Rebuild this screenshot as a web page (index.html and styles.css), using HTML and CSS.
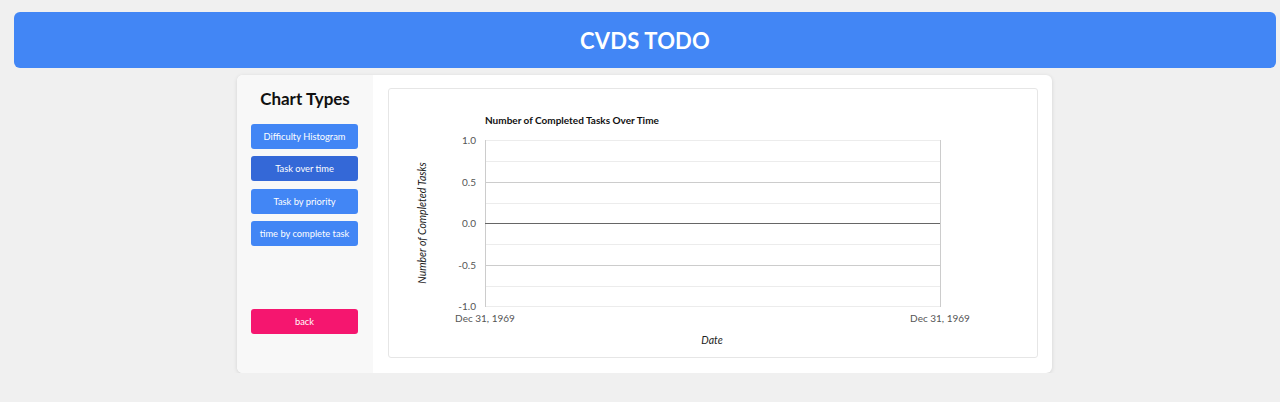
FILE: index.html
```html
<!DOCTYPE html>
<html>
<head>
<meta charset="utf-8">
<link rel="stylesheet" href="styles.css">
</head>
<body>
<div class="page">
  <header class="topbar"><h1 class="brand">CVDS TODO</h1></header>
  <main class="card">
    <aside class="sidebar">
      <h2 class="side-title">Chart Types</h2>
      <div class="btn-list">
        <button class="btn">Difficulty Histogram</button>
        <button class="btn active">Task over time</button>
        <button class="btn">Task by priority</button>
        <button class="btn">time by complete task</button>
      </div>
      <button class="btn back">back</button>
    </aside>
    <section class="content">
      <div class="chart-box">
        <svg class="chart" width="650" height="270" viewBox="0 0 650 270">
          <text class="c-title" x="97" y="36">Number of Completed Tasks Over Time</text>
          <g class="grid">
            <line x1="97" x2="552" y1="52.5" y2="52.5"/>
            <line x1="97" x2="552" y1="73.5" y2="73.5"/>
            <line x1="97" x2="552" y1="94.5" y2="94.5"/>
            <line x1="97" x2="552" y1="115.5" y2="115.5"/>
            <line x1="97" x2="552" y1="156.5" y2="156.5"/>
            <line x1="97" x2="552" y1="177.5" y2="177.5"/>
            <line x1="97" x2="552" y1="198.5" y2="198.5"/>
            <line x1="97" x2="552" y1="218.5" y2="218.5"/>
          </g>
          <g class="major">
            <line x1="97" x2="552" y1="94.5" y2="94.5"/>
            <line x1="97" x2="552" y1="177.5" y2="177.5"/>
          </g>
          <line class="frame" x1="97.5" x2="97.5" y1="52" y2="219"/>
          <line class="frame" x1="552.5" x2="552.5" y1="52" y2="219"/>
          <line class="zero" x1="97" x2="552" y1="135.5" y2="135.5"/>
          <g class="ylab">
            <text x="88" y="56">1.0</text>
            <text x="88" y="98">0.5</text>
            <text x="88" y="139">0.0</text>
            <text x="88" y="181">-0.5</text>
            <text x="88" y="222">-1.0</text>
          </g>
          <g class="xlab">
            <text x="97" y="234">Dec 31, 1969</text>
            <text x="552" y="234">Dec 31, 1969</text>
          </g>
          <text class="axis-title" x="324" y="256">Date</text>
          <text class="axis-title" transform="translate(38 135) rotate(-90)">Number of Completed Tasks</text>
        </svg>
      </div>
    </section>
  </main>
</div>
</body>
</html>
```
FILE: styles.css
```css
html, body {
  margin: 0;
  padding: 0;
  background: #f0f0f0;
  font-family: "Lato", "Open Sans", sans-serif;
}
.page {
  margin: 12px 4px 0 14px;
}
.topbar {
  height: 56px;
  background: #4286f5;
  border-radius: 6px;
  display: flex;
  align-items: center;
  justify-content: center;
}
.brand {
  margin: 0;
  color: #fff;
  font-size: 22px;
  font-weight: 700;
  letter-spacing: 0.2px;
}
.card {
  width: 815px;
  height: 298px;
  margin: 7px 0 0 calc(50% - 408px);
  background: #fff;
  border-radius: 6px;
  box-shadow: 0 1px 4px rgba(0,0,0,0.12);
  display: flex;
  overflow: hidden;
}
.sidebar {
  width: 136px;
  background: #f8f8f8;
  padding: 13px 14px 0 14px;
  box-sizing: border-box;
  display: flex;
  flex-direction: column;
}
.side-title {
  margin: 0;
  font-size: 17px;
  font-weight: 700;
  color: #111;
  text-align: center;
  height: 22px;
  line-height: 22px;
}
.btn-list {
  margin-top: 14px;
  display: flex;
  flex-direction: column;
  gap: 7.33px;
}
.btn {
  width: 107px;
  height: 25px;
  border: none;
  border-radius: 3px;
  background: #4286f5;
  color: #fff;
  font-family: "Lato", "Open Sans", sans-serif;
  font-size: 9.3px;
  padding: 0;
  cursor: pointer;
}
.btn.active {
  background: #3468d7;
}
.btn.back {
  margin-top: 63px;
  background: #f5166f;
}
.content {
  flex: 1;
  padding: 13px 14px 15px 15px;
}
.chart-box {
  width: 650px;
  height: 270px;
  border: 1px solid #e6e6e6;
  border-radius: 3px;
  box-sizing: border-box;
  overflow: hidden;
}
.chart {
  display: block;
  margin: -1px 0 0 -1px;
  font-family: "Lato", "Open Sans", sans-serif;
}
.c-title {
  font-size: 10px;
  font-weight: 700;
  fill: #111;
}
.grid line {
  stroke: #ececec;
  stroke-width: 1;
}
.major line {
  stroke: #cccccc;
  stroke-width: 1;
}
.frame {
  stroke: #cccccc;
  stroke-width: 1;
}
.zero {
  stroke: #666;
  stroke-width: 1;
}
.ylab text {
  font-size: 10px;
  fill: #555;
  text-anchor: end;
}
.xlab text {
  font-size: 10px;
  fill: #555;
  text-anchor: middle;
}
.axis-title {
  font-size: 10.5px;
  font-style: italic;
  fill: #222;
  text-anchor: middle;
}
```
